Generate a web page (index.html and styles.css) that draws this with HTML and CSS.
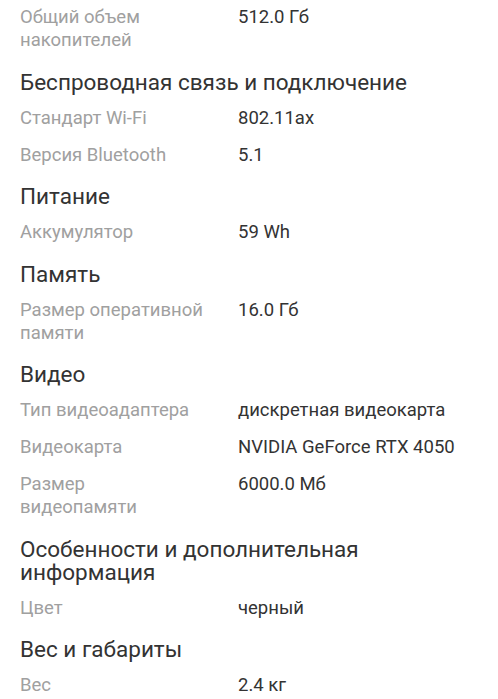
FILE: index.html
```html
<!DOCTYPE html>
<html lang="ru">
<head>
<meta charset="utf-8">
<link rel="stylesheet" href="styles.css">
</head>
<body>
<div class="list">
  <div class="row"><div class="label">Общий объем накопителей</div><div class="value">512.0 Гб</div></div>

  <h2 class="heading">Беспроводная связь и подключение</h2>
  <div class="row"><div class="label">Стандарт Wi-Fi</div><div class="value">802.11ax</div></div>
  <div class="row"><div class="label">Версия Bluetooth</div><div class="value">5.1</div></div>

  <h2 class="heading">Питание</h2>
  <div class="row"><div class="label">Аккумулятор</div><div class="value">59 Wh</div></div>

  <h2 class="heading">Память</h2>
  <div class="row"><div class="label">Размер оперативной памяти</div><div class="value">16.0 Гб</div></div>

  <h2 class="heading">Видео</h2>
  <div class="row"><div class="label">Тип видеоадаптера</div><div class="value">дискретная видеокарта</div></div>
  <div class="row"><div class="label">Видеокарта</div><div class="value">NVIDIA GeForce RTX 4050</div></div>
  <div class="row"><div class="label">Размер видеопамяти</div><div class="value">6000.0 Мб</div></div>

  <h2 class="heading">Особенности и дополнительная информация</h2>
  <div class="row"><div class="label">Цвет</div><div class="value">черный</div></div>

  <h2 class="heading">Вес и габариты</h2>
  <div class="row"><div class="label">Вес</div><div class="value">2.4 кг</div></div>
</div>
</body>
</html>
```
FILE: styles.css
```css
html, body {
  margin: 0;
  padding: 0;
  background: #ffffff;
}
body {
  font-family: Roboto, "Noto Sans", sans-serif;
  color: #333333;
  overflow: hidden;
}
.list {
  margin-top: -1px;
  padding: 0 20px;
}
.row {
  display: flex;
  padding: 7px 0;
  font-size: 18.5px;
  line-height: 23px;
}
.label {
  width: 218px;
  flex: none;
  color: #a0a0a0;
  padding-right: 33px;
  box-sizing: border-box;
}
.value {
  color: #333333;
}
.heading {
  margin: 11.5px 0 6px;
  font-size: 22.5px;
  font-weight: 400;
  line-height: 23px;
  color: #333333;
}
```
